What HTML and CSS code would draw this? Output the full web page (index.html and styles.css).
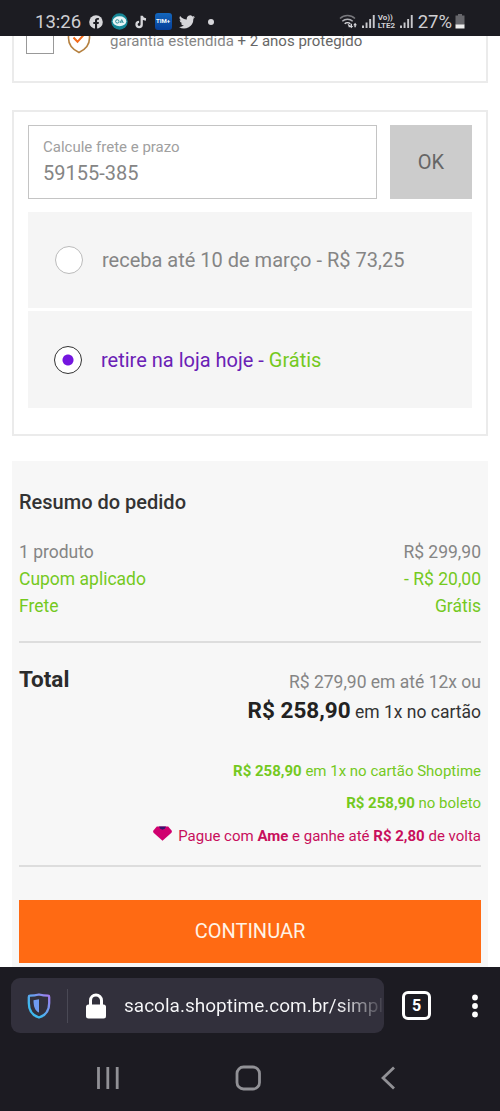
FILE: index.html
```html
<!DOCTYPE html>
<html lang="pt-BR">
<head>
<meta charset="utf-8">
<title>Resumo do pedido</title>
<link rel="stylesheet" href="styles.css">
</head>
<body>
<header class="status">
  <span class="clock">13:26</span>
  <div class="notifications">
    <svg width="14" height="14" viewBox="0 0 14 14"><circle cx="7" cy="7" r="6.8" fill="#d6d6da"/><path d="M6 14V9.1H4.3V7H6V5.5C6 3.700 7 2.900 8.600 2.900h1.300v1.800H9c-.7 0-.9.400-.9 1V7h1.800l-.3 2.100H8.100V14z" fill="#1c1c22"/></svg>
    <svg width="17" height="17" viewBox="0 0 17 17"><circle cx="8.500" cy="8.500" r="8.200" fill="#168797"/><ellipse cx="8.500" cy="8.200" rx="6.800" ry="5" fill="#e6f4f5"/><circle cx="6.300" cy="8.400" r="1.700" fill="none" stroke="#2b8d99"/><path d="M9 10l1.700-3.400L12.300 10M9.700 9h2" fill="none" stroke="#2b8d99"/></svg>
    <svg width="12" height="14" viewBox="0 0 12 14"><path d="M6.700.8v8.700a2.600 2.600 0 1 1-2.600-2.600M6.700 1c.3 2 1.800 3.300 4.300 3.500" fill="none" stroke="#d6d6da" stroke-width="2.300"/></svg>
    <span class="tim">TIM+</span>
    <svg width="16" height="14" viewBox="0 0 24 20"><path d="M24 2.400a10 10 0 0 1-2.800.8A5 5 0 0 0 23.300.5a10 10 0 0 1-3.100 1.200A4.900 4.900 0 0 0 11.800 6.200 14 14 0 0 1 1.700 1a4.900 4.900 0 0 0 1.500 6.600 5 5 0 0 1-2.200-.6 4.900 4.900 0 0 0 3.900 4.900 5 5 0 0 1-2.200.1 4.900 4.900 0 0 0 4.600 3.400A10 10 0 0 1 0 17.500 14 14 0 0 0 21.500 5 10 10 0 0 0 24 2.400z" fill="#d6d6da"/></svg>
    <i class="more-dot"></i>
  </div>
  <div class="signals">
    <svg width="20" height="15" viewBox="0 0 20 15"><g fill="none" stroke-width="1.500"><path d="M1 4.500a11 11 0 0 1 15 0" stroke="#77777c"/><path d="M3.300 7.300a7.600 7.600 0 0 1 10.400 0" stroke="#b0b0b5"/><path d="M5.700 9.800a4 4 0 0 1 5.600 0" stroke="#d6d6da"/></g><path d="M8.500 9.500l3 2.200-1.500 2z M12.300 14.200L10.400 12h1.200V9.800h1.400V12h1.200z M15.400 13.200v-2h-1.200l1.900-2.400L18 11.200h-1.200v2z" fill="#d6d6da"/></svg>
    <svg class="bars" width="13" height="13" viewBox="0 0 13 13"><path d="M0 10.500h2V13H0zM3.600 7.500h1.900V13H3.600zM7.200 4h1.900v9H7.200zM10.800 0h1.900v13h-1.900z" fill="#c8c8cc"/></svg>
    <span class="volte"><b>Vo))</b><b>LTE2</b></span>
    <svg class="bars" width="13" height="13" viewBox="0 0 13 13"><path d="M0 10.500h2V13H0zM3.600 7.500h1.900V13H3.600zM7.200 4h1.900v9H7.200zM10.800 0h1.900v13h-1.900z" fill="#c8c8cc"/></svg>
    <span class="percent">27%</span>
    <svg width="10" height="15" viewBox="0 0 10 15"><path d="M3 0h4v1.500h2.500V11h-9V1.500H3z" fill="#66666b"/><path d="M.5 10.500h9v4h-9z" fill="#eee"/></svg>
  </div>
</header>

<main class="page">
  <section class="warranty">
    <span class="checkbox"></span>
    <svg class="guard" width="24" height="30" viewBox="0 0 24 30"><path d="M12 2C9 4.500 5.500 5.500 1.500 5.500V14c0 6.500 4 11.500 10.500 14.500 6.500-3 10.500-8 10.500-14.500V5.500C18.500 5.500 15 4.500 12 2z" fill="none" stroke="#b5803f" stroke-width="1.600"/><path d="M6.500 13.500l4 4.300 7-7.800" fill="none" stroke="#f36c1c" stroke-width="2"/></svg>
    <span class="warranty-text">garantia estendida <em>+ 2 anos protegido</em></span>
  </section>

  <section class="shipping">
    <div class="cep">
      <label class="field"><span class="hint">Calcule frete e prazo</span><span class="value">59155-385</span></label>
      <button class="ok">OK</button>
    </div>
    <div class="option"><i class="radio"></i><span>receba até 10 de março - R$ 73,25</span></div>
    <div class="option chosen"><i class="radio"></i><span>retire na loja hoje - <em>Grátis</em></span></div>
  </section>

  <section class="summary">
    <h2>Resumo do pedido</h2>
    <div class="lines">
      <div class="line"><span>1 produto</span><span>R$ 299,90</span></div>
      <div class="line green"><span>Cupom aplicado</span><span>- R$ 20,00</span></div>
      <div class="line green"><span>Frete</span><span>Grátis</span></div>
    </div>
    <div class="total">
      <strong class="total-label">Total</strong>
      <div class="prices">
        <span class="parcel">R$ 279,90 em até 12x ou</span>
        <span class="cash"><b>R$ 258,90</b> em 1x no cartão</span>
      </div>
    </div>
    <div class="offers">
      <span><b>R$ 258,90</b> em 1x no cartão Shoptime</span>
      <span><b>R$ 258,90</b> no boleto</span>
      <span class="ame"><svg class="gem" width="19" height="15" viewBox="0 0 19 15"><path d="M3.800.5h11.400l3.600 4.300c.2 1 0 1.600-.6 2.300L9.500 14.700.8 7.100C.2 6.400 0 5.800.2 4.800z" fill="#d0006f"/><path d="M6 .5h7l-1.200 2.300-2.300.9-2.300-.9z" fill="#36136f"/></svg><span>Pague com <b>Ame</b> e ganhe até <b>R$ 2,80</b> de volta</span></span>
    </div>
    <button class="continue">CONTINUAR</button>
  </section>
</main>

<footer class="browser">
  <div class="toolbar">
    <div class="address">
      <svg class="shield" width="24" height="26" viewBox="0 0 24 26"><defs><linearGradient id="edge" x1="0" y1="1" x2="1" y2="0"><stop offset=".3" stop-color="#3fb8ee"/><stop offset="1" stop-color="#a779ee"/></linearGradient></defs><path d="M12 1.500C9 2.300 5.500 2.700 3 2.700c-.8 0-1.200.5-1.200 1.300v6c0 7.500 3.700 12.500 10.200 14.500C18.500 22.500 22.200 17.500 22.200 10V4c0-.8-.4-1.300-1.200-1.300-2.500 0-6-.4-9-1.200z" fill="none" stroke="url(#edge)" stroke-width="2.300"/><path d="M12 6.300v13.200C8.500 18 6.500 14.500 6.500 7.200z" fill="#6f9bf2"/></svg>
      <i class="divider"></i>
      <svg class="lock" width="20" height="26" viewBox="0 0 20 26"><path d="M4.500 12V7.500a5.500 5.500 0 0 1 11 0V12" fill="none" stroke="#fff" stroke-width="3"/><rect y="11.500" width="20" height="14" rx="2.500" fill="#fff"/></svg>
      <span class="url">sacola.shoptime.com.br/simple</span>
    </div>
    <span class="tabs">5</span>
    <svg class="menu" width="6" height="24" viewBox="0 0 6 24"><g fill="#fff"><circle cx="3" cy="3.500" r="2.900"/><circle cx="3" cy="12" r="2.900"/><circle cx="3" cy="20.500" r="2.900"/></g></svg>
  </div>
  <nav class="system">
    <svg width="22" height="24" viewBox="0 0 22 24"><path d="M1.500 1v22M10.800 1v22M20.200 1v22" stroke="#919196" stroke-width="2.800"/></svg>
    <svg width="26" height="26" viewBox="0 0 26 26"><rect x="2" y="2" width="22.500" height="22" rx="6.500" fill="none" stroke="#919196" stroke-width="2.800"/></svg>
    <svg width="14" height="24" viewBox="0 0 14 24"><path d="M13 1.500L2 12l11 10.500" fill="none" stroke="#919196" stroke-width="2.800"/></svg>
  </nav>
</footer>
</body>
</html>
```

FILE: styles.css
```css
* { box-sizing: border-box; }
body {
  margin: 0;
  width: 500px;
  height: 1111px;
  display: flex;
  flex-direction: column;
  overflow: hidden;
  background: #fff;
  color: #858585;
  font-family: Roboto, "Liberation Sans", sans-serif;
}
svg { display: block; flex: none; }
em { font-style: normal; }
i { display: block; flex: none; }
button { border: 0; padding: 0; font-family: inherit; }

.status {
  height: 36px;
  flex: none;
  display: flex;
  align-items: center;
  padding: 7px 35px 0 35px;
  background: #1c1c22;
  color: #cfcfd3;
}
.clock { width: 54px; font-size: 18.500px; line-height: 22px; }
.notifications { display: flex; align-items: center; gap: 7.500px; }
.tim {
  width: 17px;
  height: 17px;
  border-radius: 3px;
  background: linear-gradient(#1467bd, #063f9a);
  color: #fff;
  font-size: 6px;
  font-weight: 700;
  line-height: 15px;
  text-align: center;
}
.more-dot { width: 6px; height: 6px; margin-left: 5px; border-radius: 50%; background: #d6d6da; }
.signals { margin-left: auto; display: flex; align-items: center; gap: 3px; }
.volte { width: 19px; display: flex; flex-direction: column; font-size: 8px; line-height: 7.500px; }
.percent { margin-left: 2px; font-size: 18.500px; line-height: 22px; }

.page { height: 931px; flex: none; overflow: hidden; padding: 0 12px; }
.warranty {
  height: 47px;
  display: flex;
  align-items: flex-start;
  border: solid #ebebeb;
  border-width: 0 2px 2px;
  padding-left: 12px;
}
.checkbox { width: 28px; height: 28px; margin-top: -10px; border: 1px solid #999; }
.guard { margin: -12px 0 0 13px; }
.warranty-text { margin: -5px 0 0 19px; font-size: 15px; line-height: 20px; }
.warranty-text em { color: #666; }

.shipping {
  height: 326px;
  margin-top: 27px;
  padding: 13px 14px 0 14px;
  border: 2px solid #ebebeb;
}
.cep { display: flex; justify-content: space-between; height: 74px; margin-bottom: 13px; }
.field {
  width: 349px;
  border: 1.500px solid #c4c4c4;
  padding: 11px 14px;
  display: flex;
  flex-direction: column;
}
.hint { color: #a0a0a0; font-size: 15px; line-height: 20px; }
.value { font-size: 20px; line-height: 32px; }
.ok { width: 82px; background: #ccc; color: #666; font-size: 20px; }
.option {
  height: 96px;
  display: flex;
  align-items: center;
  gap: 19px;
  margin-bottom: 3px;
  padding-left: 27px;
  background: #f5f5f5;
  font-size: 20px;
}
.radio { width: 28px; height: 28px; border: 1.500px solid #bbb; border-radius: 50%; background: #fff; }
.chosen { height: 97px; padding-left: 26px; color: #6a21b5; }
.chosen em, .green { color: #74c91e; }
.chosen .radio { border-color: #333; background: radial-gradient(circle, #7416df 5px, #fff 6px); }

.summary { height: 520px; margin-top: 25px; padding: 26px 7px 0; background: #f7f7f7; }
.summary h2 { margin: 0; color: #333; font-size: 20px; font-weight: 500; line-height: 30px; }
.lines { margin-top: 22px; padding-bottom: 21px; border-bottom: 2px solid #ddd; }
.line { display: flex; justify-content: space-between; font-size: 17.500px; line-height: 27px; }
.total { display: flex; justify-content: space-between; padding-top: 22px; }
.total-label { margin-top: -1px; color: #2b2b2b; font-size: 22.500px; line-height: 30px; }
.prices { display: flex; flex-direction: column; text-align: right; }
.parcel { font-size: 17.500px; line-height: 35px; }
.cash { margin-top: -2px; color: #333; font-size: 17.500px; line-height: 24px; }
.cash b { color: #222; font-size: 22.500px; }
.offers {
  display: flex;
  flex-direction: column;
  align-items: flex-end;
  margin-top: 31px;
  padding-bottom: 13px;
  border-bottom: 2px solid #ddd;
  color: #74c91e;
  font-size: 15px;
  line-height: 32.300px;
}
.ame { display: flex; align-items: center; gap: 6px; color: #c80f5c; }
.gem { margin-top: -4px; }
.continue {
  display: block;
  width: 100%;
  height: 63px;
  margin-top: 33px;
  background: #ff6a13;
  color: #fff3e6;
  font-size: 20px;
}

.browser { flex: 1; background: #1c1b22; }
.toolbar { display: flex; align-items: center; padding: 11px 22px 0 11px; }
.address {
  width: 373px;
  height: 55px;
  display: flex;
  align-items: center;
  padding-left: 16px;
  border-radius: 9px;
  background: #32303c;
}
.divider { width: 1px; height: 34px; margin: 0 18px 0 16px; background: #4a4955; }
.url {
  width: 258px;
  margin-left: 18px;
  overflow: hidden;
  white-space: nowrap;
  font-size: 19px;
  line-height: 26px;
  background: linear-gradient(90deg, #f8f8fa 215px, #32303c 262px);
  background-clip: text;
  color: transparent;
}
.tabs {
  width: 29px;
  height: 29px;
  margin-left: 18px;
  border: 3px solid #fff;
  border-radius: 6px;
  color: #fff;
  font-size: 16px;
  font-weight: 700;
  line-height: 24px;
  text-align: center;
}
.menu { margin-left: auto; }
.system { display: flex; align-items: center; justify-content: space-between; padding: 32px 105px 0 97px; }
.system svg:nth-child(2) { margin-right: 4px; }
```
